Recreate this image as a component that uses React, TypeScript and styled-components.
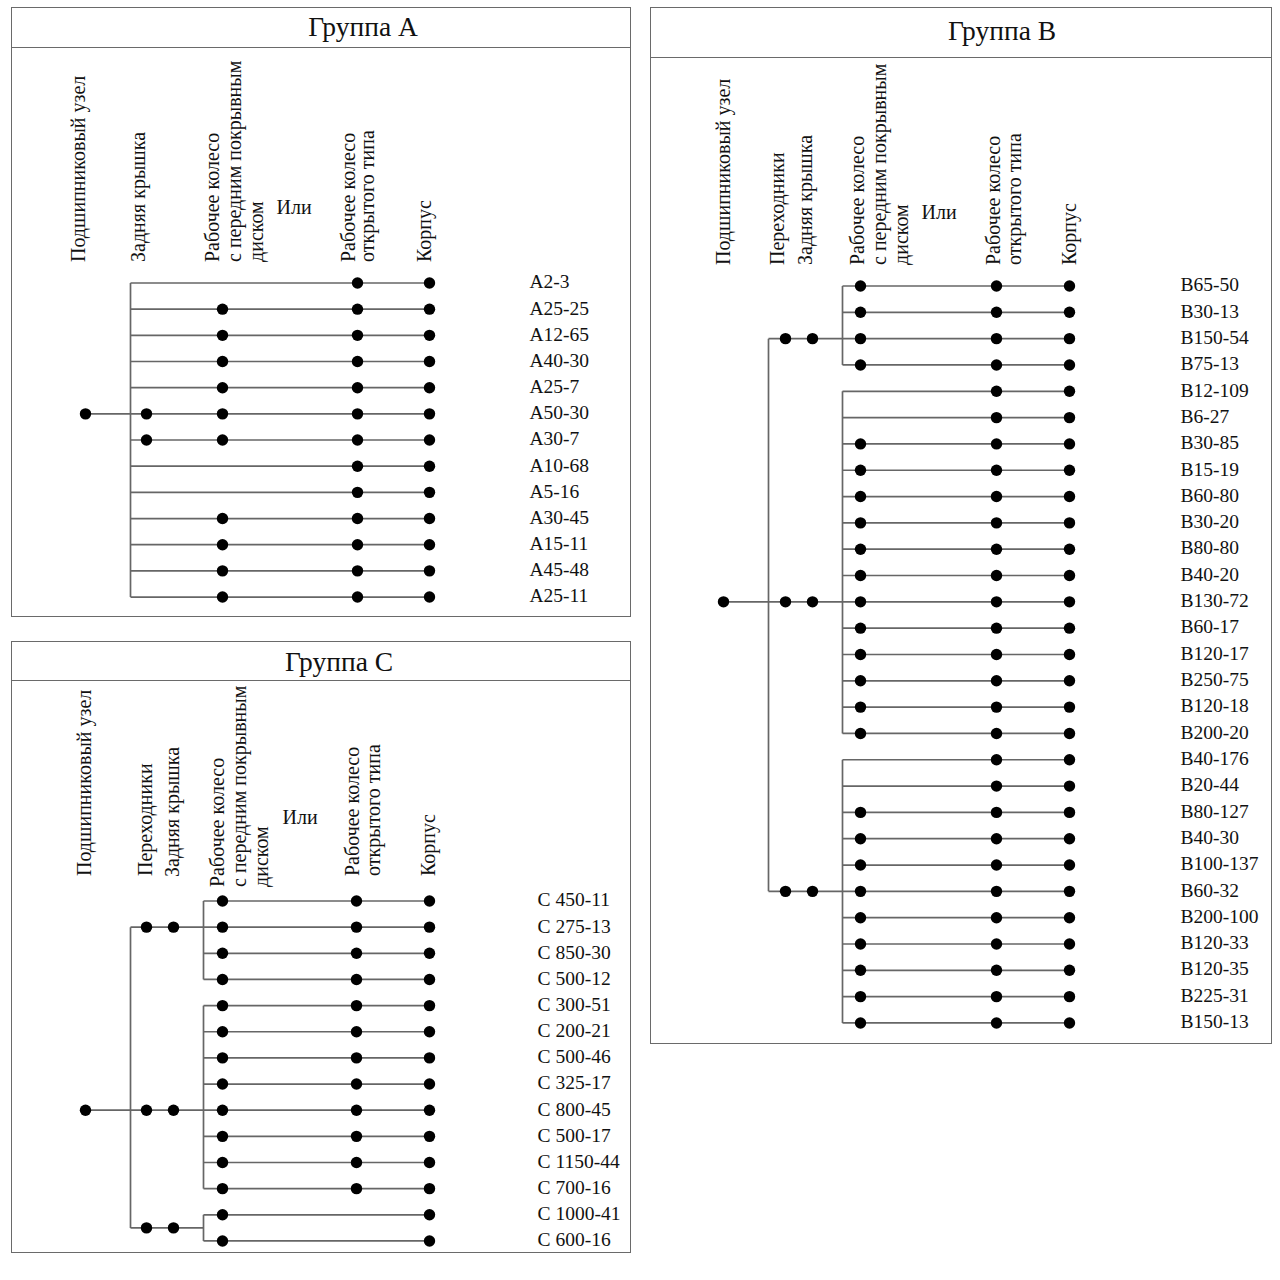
import styled, { createGlobalStyle } from 'styled-components';

const GlobalStyle = createGlobalStyle`
  html, body {
    margin: 0;
    padding: 0;
    background: #ffffff;
  }
  body {
    font-family: 'Liberation Serif', 'Times New Roman', serif;
    color: #111111;
  }
`;

interface HeaderLine {
  text: string;
  x: number;
  bottom: number;
}

interface GroupSpec {
  attach: number;
  from: number;
  to: number;
}

interface RowSpec {
  label: string;
  mask: string;
}

interface PanelSpec {
  title: string;
  x: number;
  y: number;
  width: number;
  height: number;
  titleHeight: number;
  titleShift: number;
  titleNudge: number;
  headers: HeaderLine[];
  orLabel: { x: number; y: number };
  root: { x: number; row: number };
  trunkX: number;
  branchX: number;
  nodeDots: number[];
  groups: GroupSpec[];
  columns: number[];
  rows: RowSpec[];
  rowTop: number;
  rowStep: number;
  labelX: number;
}

const BORDER = 1.5;
const LINE = '#666666';

const rows = (labels: string[], masks: string[]): RowSpec[] =>
  labels.map((label, i) => ({ label, mask: masks[i] }));

const groupA: PanelSpec = {
  title: 'Группа А',
  x: 11,
  y: 7,
  width: 620,
  height: 610,
  titleHeight: 39.5,
  titleShift: 84,
  titleNudge: 0,
  headers: [
    { text: 'Подшипниковый узел', x: 80, bottom: 262 },
    { text: 'Задняя крышка', x: 140, bottom: 262 },
    { text: 'Рабочее колесо', x: 214, bottom: 262 },
    { text: 'с передним покрывным', x: 236, bottom: 262 },
    { text: 'диском', x: 258, bottom: 262 },
    { text: 'Рабочее колесо', x: 350, bottom: 262 },
    { text: 'открытого типа', x: 369, bottom: 262 },
    { text: 'Корпус', x: 426, bottom: 262 },
  ],
  orLabel: { x: 277, y: 214 },
  root: { x: 86, row: 5 },
  trunkX: 131,
  branchX: 131,
  nodeDots: [],
  groups: [{ attach: 5, from: 0, to: 12 }],
  columns: [147, 223, 358, 430],
  rows: rows(
    ['A2-3', 'A25-25', 'A12-65', 'A40-30', 'A25-7', 'A50-30', 'A30-7', 'A10-68', 'A5-16', 'A30-45', 'A15-11', 'A45-48', 'A25-11'],
    ['..xx', '.xxx', '.xxx', '.xxx', '.xxx', 'xxxx', 'xxxx', '..xx', '..xx', '.xxx', '.xxx', '.xxx', '.xxx'],
  ),
  rowTop: 283,
  rowStep: 26.17,
  labelX: 530,
};

const groupC: PanelSpec = {
  title: 'Группа С',
  x: 11,
  y: 641,
  width: 620,
  height: 612,
  titleHeight: 38.5,
  titleShift: 36,
  titleNudge: 3,
  headers: [
    { text: 'Подшипниковый узел', x: 86, bottom: 876 },
    { text: 'Переходники', x: 147, bottom: 876 },
    { text: 'Задняя крышка', x: 174, bottom: 877 },
    { text: 'Рабочее колесо', x: 219, bottom: 887 },
    { text: 'с передним покрывным', x: 241, bottom: 887 },
    { text: 'диском', x: 263, bottom: 887 },
    { text: 'Рабочее колесо', x: 354, bottom: 876 },
    { text: 'открытого типа', x: 375, bottom: 876 },
    { text: 'Корпус', x: 430, bottom: 876 },
  ],
  orLabel: { x: 283, y: 824 },
  root: { x: 86, row: 8 },
  trunkX: 131,
  branchX: 204,
  nodeDots: [147, 174],
  groups: [
    { attach: 1, from: 0, to: 3 },
    { attach: 8, from: 4, to: 11 },
    { attach: 12.5, from: 12, to: 13 },
  ],
  columns: [223, 357, 430],
  rows: rows(
    ['C 450-11', 'C 275-13', 'C 850-30', 'C 500-12', 'C 300-51', 'C 200-21', 'C 500-46', 'C 325-17', 'C 800-45', 'C 500-17', 'C 1150-44', 'C 700-16', 'C 1000-41', 'C 600-16'],
    ['xxx', 'xxx', 'xxx', 'xxx', 'xxx', 'xxx', 'xxx', 'xxx', 'xxx', 'xxx', 'xxx', 'xxx', 'x.x', 'x.x'],
  ),
  rowTop: 901,
  rowStep: 26.15,
  labelX: 538,
};

const groupB: PanelSpec = {
  title: 'Группа В',
  x: 650,
  y: 7,
  width: 622,
  height: 1037,
  titleHeight: 49.5,
  titleShift: 82,
  titleNudge: -3,
  headers: [
    { text: 'Подшипниковый узел', x: 725, bottom: 265 },
    { text: 'Переходники', x: 779, bottom: 265 },
    { text: 'Задняя крышка', x: 807, bottom: 265 },
    { text: 'Рабочее колесо', x: 859, bottom: 265 },
    { text: 'с передним покрывным', x: 881, bottom: 265 },
    { text: 'диском', x: 903, bottom: 265 },
    { text: 'Рабочее колесо', x: 995, bottom: 265 },
    { text: 'открытого типа', x: 1016, bottom: 265 },
    { text: 'Корпус', x: 1071, bottom: 265 },
  ],
  orLabel: { x: 922, y: 219 },
  root: { x: 724, row: 12 },
  trunkX: 769,
  branchX: 843,
  nodeDots: [786, 813],
  groups: [
    { attach: 2, from: 0, to: 3 },
    { attach: 12, from: 4, to: 17 },
    { attach: 23, from: 18, to: 28 },
  ],
  columns: [861, 997, 1070],
  rows: rows(
    [
      'B65-50', 'B30-13', 'B150-54', 'B75-13', 'B12-109', 'B6-27', 'B30-85', 'B15-19', 'B60-80', 'B30-20',
      'B80-80', 'B40-20', 'B130-72', 'B60-17', 'B120-17', 'B250-75', 'B120-18', 'B200-20', 'B40-176', 'B20-44',
      'B80-127', 'B40-30', 'B100-137', 'B60-32', 'B200-100', 'B120-33', 'B120-35', 'B225-31', 'B150-13',
    ],
    [
      'xxx', 'xxx', 'xxx', 'xxx', '.xx', '.xx', 'xxx', 'xxx', 'xxx', 'xxx',
      'xxx', 'xxx', 'xxx', 'xxx', 'xxx', 'xxx', 'xxx', 'xxx', '.xx', '.xx',
      'xxx', 'xxx', 'xxx', 'xxx', 'xxx', 'xxx', 'xxx', 'xxx', 'xxx',
    ],
  ),
  rowTop: 286,
  rowStep: 26.32,
  labelX: 1181,
};

const Page = styled.main`
  display: flex;
  align-items: flex-start;
  gap: 19px;
  padding: 7px 0 0 11px;
`;

const Column = styled.div`
  display: flex;
  flex-direction: column;
  gap: 24px;
`;

const Panel = styled.section<{ $width: number; $height: number }>`
  box-sizing: border-box;
  width: ${(p) => p.$width}px;
  height: ${(p) => p.$height}px;
  border: ${BORDER}px solid #6a6a6a;
  display: flex;
  flex-direction: column;
  background: #ffffff;
`;

const TitleBar = styled.header<{ $height: number; $shift: number; $nudge: number }>`
  box-sizing: border-box;
  flex: none;
  height: ${(p) => p.$height}px;
  border-bottom: ${BORDER}px solid #6a6a6a;
  display: flex;
  align-items: center;
  justify-content: center;
  padding-left: ${(p) => p.$shift}px;
  padding-top: ${(p) => Math.max(p.$nudge, 0)}px;
  padding-bottom: ${(p) => Math.max(-p.$nudge, 0)}px;
  font-size: 27.5px;
  color: #111111;
`;

const Body = styled.div`
  flex: 1;
  display: flex;
  align-items: flex-start;
  min-height: 0;
`;

const Diagram = styled.svg`
  display: block;
  flex: none;
  font-family: 'Liberation Serif', 'Times New Roman', serif;
  font-size: 20px;
  fill: #111111;
`;

const LabelList = styled.ol<{ $top: number }>`
  list-style: none;
  margin: 0;
  padding: ${(p) => p.$top}px 0 0;
  display: flex;
  flex-direction: column;
`;

const Label = styled.li<{ $step: number }>`
  height: ${(p) => p.$step}px;
  line-height: ${(p) => p.$step}px;
  font-size: 19.5px;
  white-space: nowrap;
  color: #111111;
`;

const Dot = ({ x, y }: { x: number; y: number }) => <circle cx={x} cy={y} r={5.7} fill="#000" />;

const Wire = ({ x1, y1, x2, y2 }: { x1: number; y1: number; x2: number; y2: number }) => (
  <line x1={x1} y1={y1} x2={x2} y2={y2} stroke={LINE} strokeWidth={1.7} />
);

const TreeDiagram = ({ spec, top, width, height }: { spec: PanelSpec; top: number; width: number; height: number }) => {
  const rowY = (i: number) => spec.rowTop + i * spec.rowStep;
  const attaches = spec.groups.map((g) => g.attach);
  const lastCol = spec.columns[spec.columns.length - 1];
  const left = spec.x + BORDER;

  return (
    <Diagram width={width} height={height} viewBox={`${left} ${top} ${width} ${height}`}>
      {spec.headers.map((h, i) => (
        <text key={i} transform={`translate(${h.x + 5.5} ${h.bottom}) rotate(-90)`}>
          {h.text}
        </text>
      ))}
      <text x={spec.orLabel.x} y={spec.orLabel.y}>
        Или
      </text>

      <Wire x1={spec.root.x} y1={rowY(spec.root.row)} x2={spec.trunkX} y2={rowY(spec.root.row)} />
      {spec.groups.length > 1 && (
        <Wire
          x1={spec.trunkX}
          y1={rowY(Math.min(...attaches))}
          x2={spec.trunkX}
          y2={rowY(Math.max(...attaches))}
        />
      )}
      {spec.groups.map((g, i) => (
        <g key={i}>
          {spec.branchX > spec.trunkX && (
            <Wire x1={spec.trunkX} y1={rowY(g.attach)} x2={spec.branchX} y2={rowY(g.attach)} />
          )}
          <Wire x1={spec.branchX} y1={rowY(g.from)} x2={spec.branchX} y2={rowY(g.to)} />
        </g>
      ))}
      {spec.rows.map((r, i) => (
        <Wire key={i} x1={spec.branchX} y1={rowY(i)} x2={lastCol} y2={rowY(i)} />
      ))}

      <Dot x={spec.root.x} y={rowY(spec.root.row)} />
      {spec.groups.map((g, i) =>
        spec.nodeDots.map((x) => <Dot key={`${i}-${x}`} x={x} y={rowY(g.attach)} />),
      )}
      {spec.rows.map((r, i) =>
        spec.columns.map((x, j) => (r.mask[j] === 'x' ? <Dot key={`${i}-${j}`} x={x} y={rowY(i)} /> : null)),
      )}
    </Diagram>
  );
};

const GroupPanel = ({ spec }: { spec: PanelSpec }) => {
  const bodyTop = spec.y + BORDER + spec.titleHeight;
  const bodyHeight = spec.y + spec.height - BORDER - bodyTop;
  const diagramWidth = spec.labelX - spec.x - BORDER;

  return (
    <Panel $width={spec.width} $height={spec.height}>
      <TitleBar $height={spec.titleHeight} $shift={spec.titleShift} $nudge={spec.titleNudge}>
        {spec.title}
      </TitleBar>
      <Body>
        <TreeDiagram spec={spec} top={bodyTop} width={diagramWidth} height={bodyHeight} />
        <LabelList $top={spec.rowTop - bodyTop - spec.rowStep / 2}>
          {spec.rows.map((r) => (
            <Label key={r.label} $step={spec.rowStep}>
              {r.label}
            </Label>
          ))}
        </LabelList>
      </Body>
    </Panel>
  );
};

const App = () => {
  return (
    <>
      <GlobalStyle />
      <Page>
        <Column>
          <GroupPanel spec={groupA} />
          <GroupPanel spec={groupC} />
        </Column>
        <GroupPanel spec={groupB} />
      </Page>
    </>
  );
};

export default App;
